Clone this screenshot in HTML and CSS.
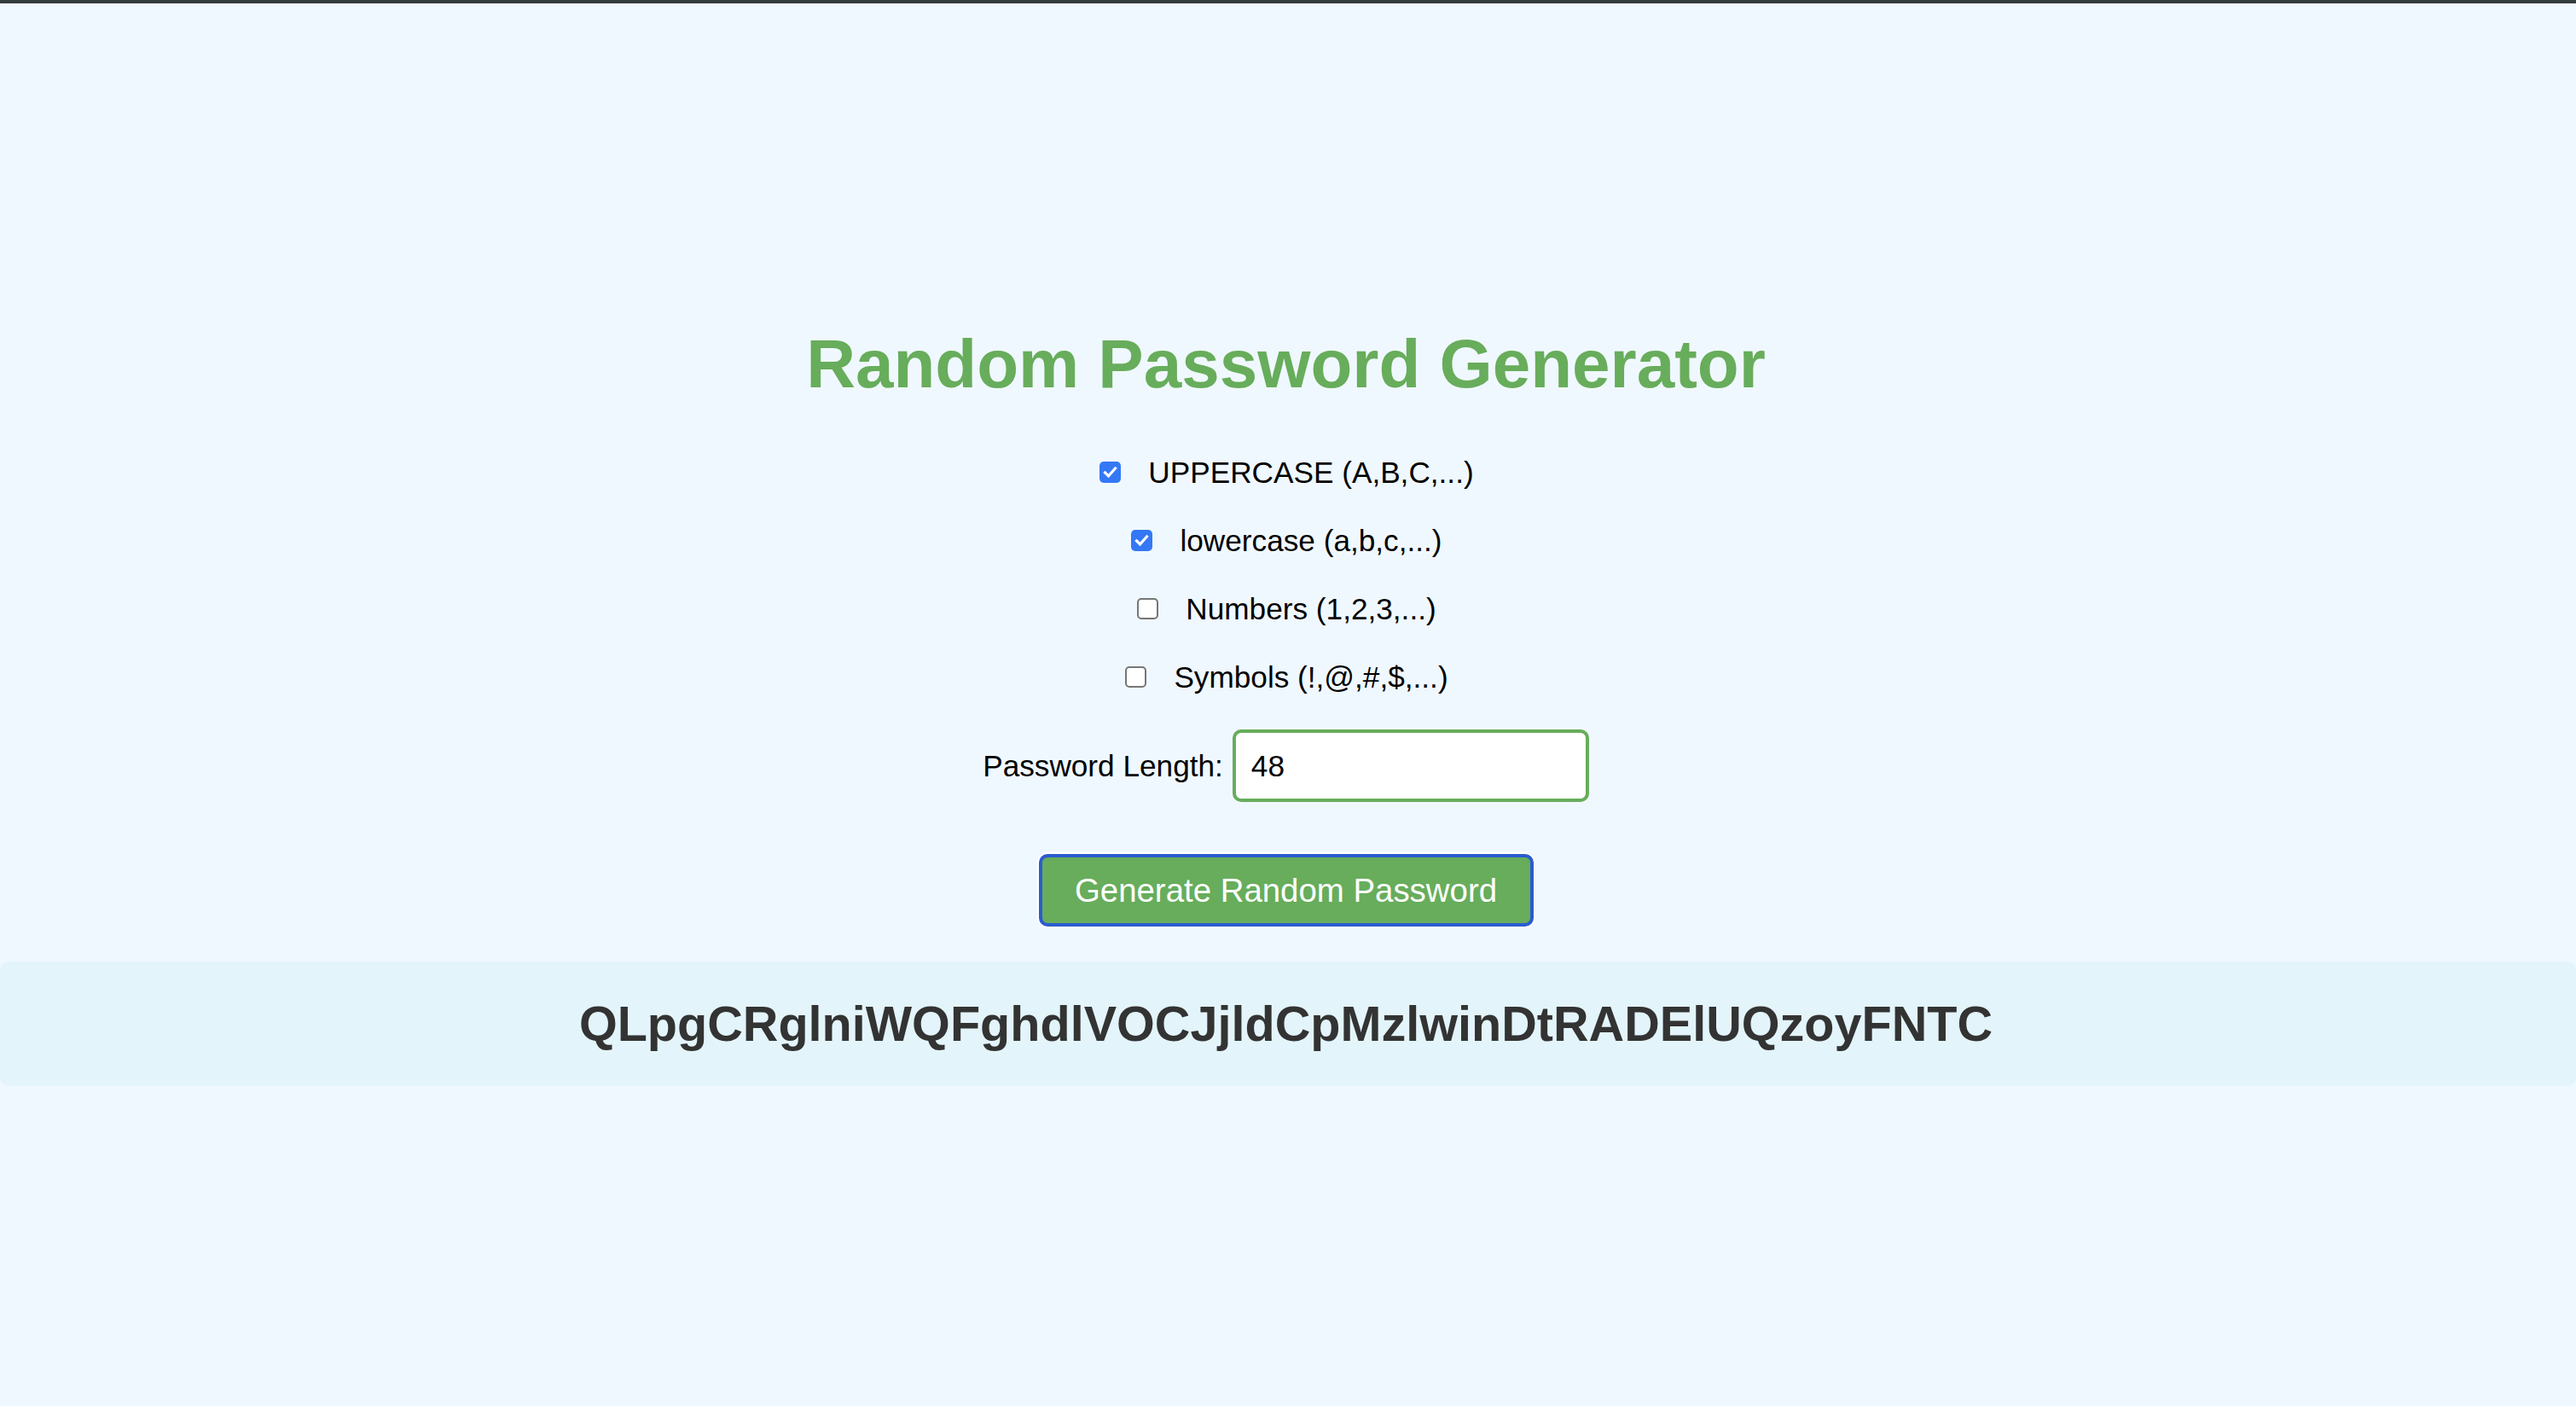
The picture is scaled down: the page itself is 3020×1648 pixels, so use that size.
FILE: index.html
```html
<!DOCTYPE html>
<html lang="en">
<head>
<meta charset="utf-8">
<title>Random Password Generator</title>
<link rel="stylesheet" href="styles.css">
</head>
<body>
<div class="topbar"></div>
<main class="app">
  <h1 class="title">Random Password Generator</h1>
  <div class="options">
    <div class="option"><span class="box checked"><svg viewBox="0 0 25 25" width="25" height="25"><path d="M6.5 13 L10.5 17 L18.5 8" fill="none" stroke="#fff" stroke-width="3.2" stroke-linecap="square"/></svg></span><span class="label">UPPERCASE (A,B,C,...)</span></div>
    <div class="option"><span class="box checked"><svg viewBox="0 0 25 25" width="25" height="25"><path d="M6.5 13 L10.5 17 L18.5 8" fill="none" stroke="#fff" stroke-width="3.2" stroke-linecap="square"/></svg></span><span class="label">lowercase (a,b,c,...)</span></div>
    <div class="option"><span class="box"></span><span class="label">Numbers (1,2,3,...)</span></div>
    <div class="option"><span class="box"></span><span class="label">Symbols (!,@,#,$,...)</span></div>
  </div>
  <div class="length-row">
    <span class="length-label">Password Length:</span>
    <div class="length-input">48</div>
  </div>
  <button class="generate">Generate Random Password</button>
</main>
<div class="result"><span class="result-text">QLpgCRglniWQFghdlVOCJjldCpMzlwinDtRADElUQzoyFNTC</span></div>
</body>
</html>
```

FILE: styles.css
```css
html, body {
  margin: 0;
  padding: 0;
}
body {
  background: #f0f8ff;
  font-family: "Liberation Sans", Arial, sans-serif;
  color: #000;
  width: 3020px;
  height: 1648px;
  overflow: hidden;
}
.topbar {
  height: 4px;
  background: #323c3b;
}
.app {
  display: flex;
  flex-direction: column;
  align-items: center;
  padding: 377px 5px 0 0;
}
.title {
  margin: 0;
  font-size: 80px;
  line-height: 92px;
  height: 92px;
  font-weight: bold;
  color: #67ad5b;
}
.options {
  display: flex;
  flex-direction: column;
  align-items: center;
  gap: 40px;
  margin-top: 60.5px;
}
.option {
  font-size: 35.2px;
  line-height: 40px;
  height: 40px;
  white-space: nowrap;
  padding-left: 2px;
}
.box {
  display: inline-block;
  vertical-align: baseline;
  overflow: hidden;
  width: 25px;
  height: 25px;
  box-sizing: border-box;
  border: 2.5px solid #767676;
  border-radius: 5px;
  background: #fff;
}
.box.checked {
  border: none;
  background: #3478f6;
}
.box svg {
  display: block;
}
.label {
  margin-left: 32px;
}
.length-row {
  display: flex;
  align-items: center;
  margin-top: 41.5px;
  height: 85px;
  font-size: 35.2px;
}
.length-label {
  margin-right: 11px;
}
.length-input {
  box-sizing: border-box;
  width: 418px;
  height: 85px;
  border: 4px solid #67ad5b;
  border-radius: 10px;
  background: #fff;
  padding: 0 18px;
  display: flex;
  align-items: center;
  font-size: 35.2px;
  color: #000;
}
.generate {
  margin-top: 61px;
  box-sizing: border-box;
  width: 580px;
  height: 85px;
  border: 4px solid #2b5ccf;
  border-radius: 10px;
  box-shadow: 0 0 0 2px #ffffff;
  background: #67ad5b;
  color: #fff;
  font-family: "Liberation Sans", Arial, sans-serif;
  font-size: 38.4px;
  padding: 0;
  display: flex;
  align-items: center;
  justify-content: center;
}
.result {
  margin-top: 41px;
  height: 146px;
  background: #e3f5fa;
  border-radius: 10px;
  display: flex;
  align-items: center;
  justify-content: center;
  padding-right: 5px;
}
.result-text {
  font-size: 57.6px;
  font-weight: bold;
  color: #333;
}
```
